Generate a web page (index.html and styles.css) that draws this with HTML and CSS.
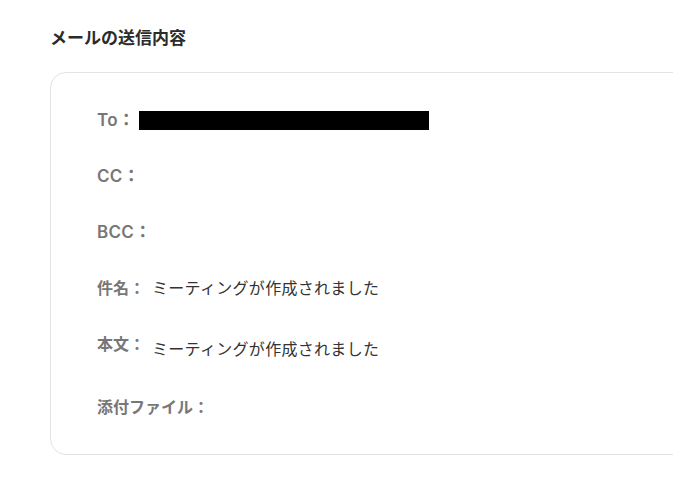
FILE: index.html
```html
<!DOCTYPE html>
<html lang="ja">
<head>
    <meta charset="UTF-8">
    <meta name="viewport" content="width=device-width, initial-scale=1.0">
    <title>メールの送信内容</title>
    <link rel="stylesheet" href="styles.css">
</head>
<body>
    <div class="page">
        <h2 class="section-title">メールの送信内容</h2>
        <!-- Mail preview card -->
        <div class="mail-card">
            <div class="mail-row">
                <span class="mail-label latin">To：</span>
                <span class="redacted"></span>
            </div>
            <div class="mail-row">
                <span class="mail-label latin">CC：</span>
            </div>
            <div class="mail-row">
                <span class="mail-label latin">BCC：</span>
            </div>
            <div class="mail-row">
                <span class="mail-label">件名：</span>
                <span class="mail-value">ミーティングが作成されました</span>
            </div>
            <div class="mail-row mail-row-body">
                <span class="mail-label">本文：</span>
                <span class="mail-value">ミーティングが作成されました</span>
            </div>
            <div class="mail-row">
                <span class="mail-label">添付ファイル：</span>
            </div>
        </div>
    </div>
</body>
</html>
```

FILE: styles.css
```css
html, body {
    margin: 0;
    overflow: hidden;
}
body {
    font-family: "Inter", "Noto Sans CJK JP", sans-serif;
    color: #333;
    background: #fff;
}
.page {
    padding: 25px 0 0 50px;
}
.section-title {
    font-size: 17px;
    font-weight: 700;
    line-height: 26px;
    margin: 0 0 21px;
    color: #2b2b2b;
}
.mail-card {
    width: 660px;
    border: 1px solid #e3e3e3;
    border-radius: 16px;
    padding: 35px 0 35px 46px;
    display: flex;
    flex-direction: column;
    gap: 32px;
}
.mail-row {
    display: flex;
    align-items: center;
    height: 24px;
}
.mail-row-body {
    align-items: flex-start;
    height: 29px;
    margin-bottom: 2px;
}
.mail-row-body .mail-value {
    margin-top: 5px;
}
.mail-label {
    font-size: 16px;
    font-weight: 600;
    color: #777;
    line-height: 24px;
    margin-right: 7px;
}
.mail-label.latin {
    font-size: 17px;
    letter-spacing: 0.3px;
    margin-right: 4px;
}
.mail-value {
    font-size: 16px;
    line-height: 24px;
    color: #333;
    letter-spacing: 0.3px;
}
.redacted {
    display: inline-block;
    width: 290px;
    height: 19px;
    background: #000;
}
```
